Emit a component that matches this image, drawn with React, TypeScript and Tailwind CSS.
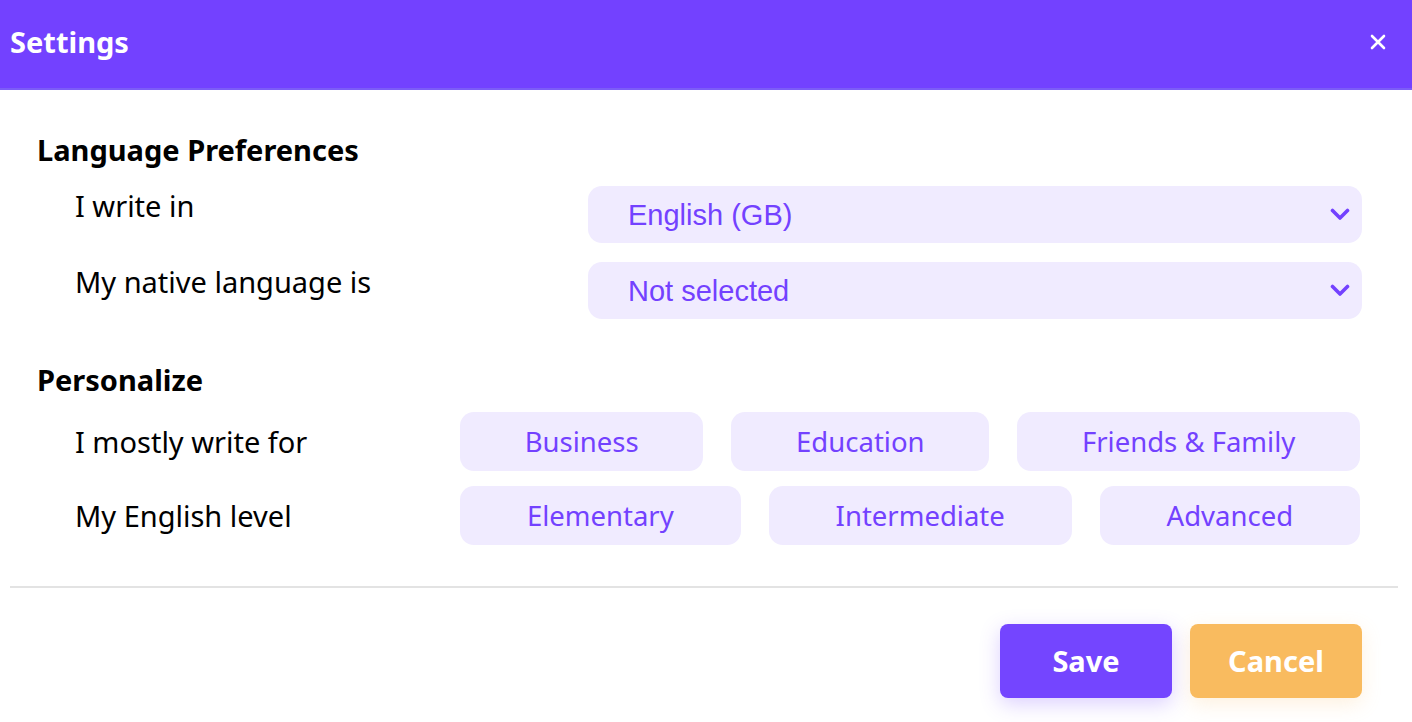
import React from "react";

const Chevron = () => (
  <svg width="20" height="13" viewBox="0 0 20 13" fill="none">
    <path d="M2.5 2.5 L10 10 L17.5 2.5" stroke="#7341ff" strokeWidth="3.6" strokeLinecap="round" strokeLinejoin="round" />
  </svg>
);

const Select = ({ value }: { value: string }) => (
  <div className="flex h-[57px] w-[774px] items-center justify-between rounded-[14px] bg-[#f0ebff] pl-[40px] pr-[12px]">
    <span className="text-[29px] leading-[36px] text-[#7341ff]" style={{ fontFamily: '"Liberation Sans", Arial, sans-serif' }}>
      {value}
    </span>
    <Chevron />
  </div>
);

const Chip = ({ label }: { label: string }) => (
  <div className="flex h-[59px] grow basis-auto items-center justify-center whitespace-nowrap rounded-[14px] bg-[#f0ebff] text-[27.5px] leading-[36px] text-[#7341ff]">
    {label}
  </div>
);

export default function App() {
  return (
    <div
      className="flex h-[722px] w-[1412px] flex-col bg-white text-black"
      style={{ fontFamily: '"Noto Sans", "Open Sans", sans-serif' }}
    >
      <div className="flex h-[90px] shrink-0 items-center justify-between border-b-2 border-[#7c5cf7] bg-[#7341ff] pb-[4px] pl-[10px] pr-[26px]">
        <h1 className="text-[29px] leading-[36px] font-bold text-white">Settings</h1>
        <svg width="16" height="16" viewBox="0 0 16 16" fill="none">
          <path d="M2 2 L14 14 M14 2 L2 14" stroke="white" strokeWidth="2.6" strokeLinecap="round" />
        </svg>
      </div>

      <div className="flex flex-col pl-[37px] pr-[50px] pt-[42px]">
        <h2 className="text-[29px] leading-[36px] font-bold">Language Preferences</h2>
        <div className="mt-[18px] flex flex-col gap-[19px] pl-[38px]">
          <div className="flex items-start justify-between">
            <span className="pt-[2px] text-[29px] leading-[36px]">I write in</span>
            <Select value="English (GB)" />
          </div>
          <div className="flex items-start justify-between">
            <span className="pt-[2px] text-[29px] leading-[36px]">My native language is</span>
            <Select value="Not selected" />
          </div>
        </div>

        <h2 className="mt-[43px] text-[29px] leading-[36px] font-bold">Personalize</h2>
        <div className="mt-[14px] flex flex-col gap-[15px] pl-[38px] pr-[2px]">
          <div className="flex items-center justify-between">
            <span className="text-[29px] leading-[36px]">I mostly write for</span>
            <div className="flex w-[900px] gap-[28px]">
              <Chip label="Business" />
              <Chip label="Education" />
              <Chip label="Friends & Family" />
            </div>
          </div>
          <div className="flex items-center justify-between">
            <span className="text-[29px] leading-[36px]">My English level</span>
            <div className="flex w-[900px] gap-[28px]">
              <Chip label="Elementary" />
              <Chip label="Intermediate" />
              <Chip label="Advanced" />
            </div>
          </div>
        </div>
      </div>

      <div className="ml-[10px] mr-[14px] mt-[41px] h-[2px] bg-[#e3e3e3]" />

      <div className="flex justify-end gap-[18px] pr-[50px] pt-[36px]">
        <button className="h-[74px] w-[172px] rounded-[8px] bg-[#7445ff] text-[29px] font-bold text-white shadow-[0_6px_20px_rgba(116,69,255,0.25)]">
          Save
        </button>
        <button className="h-[74px] w-[172px] rounded-[8px] bg-[#f9bb5f] text-[29px] font-bold text-white shadow-[0_6px_20px_rgba(249,187,95,0.2)]">
          Cancel
        </button>
      </div>
    </div>
  );
}
